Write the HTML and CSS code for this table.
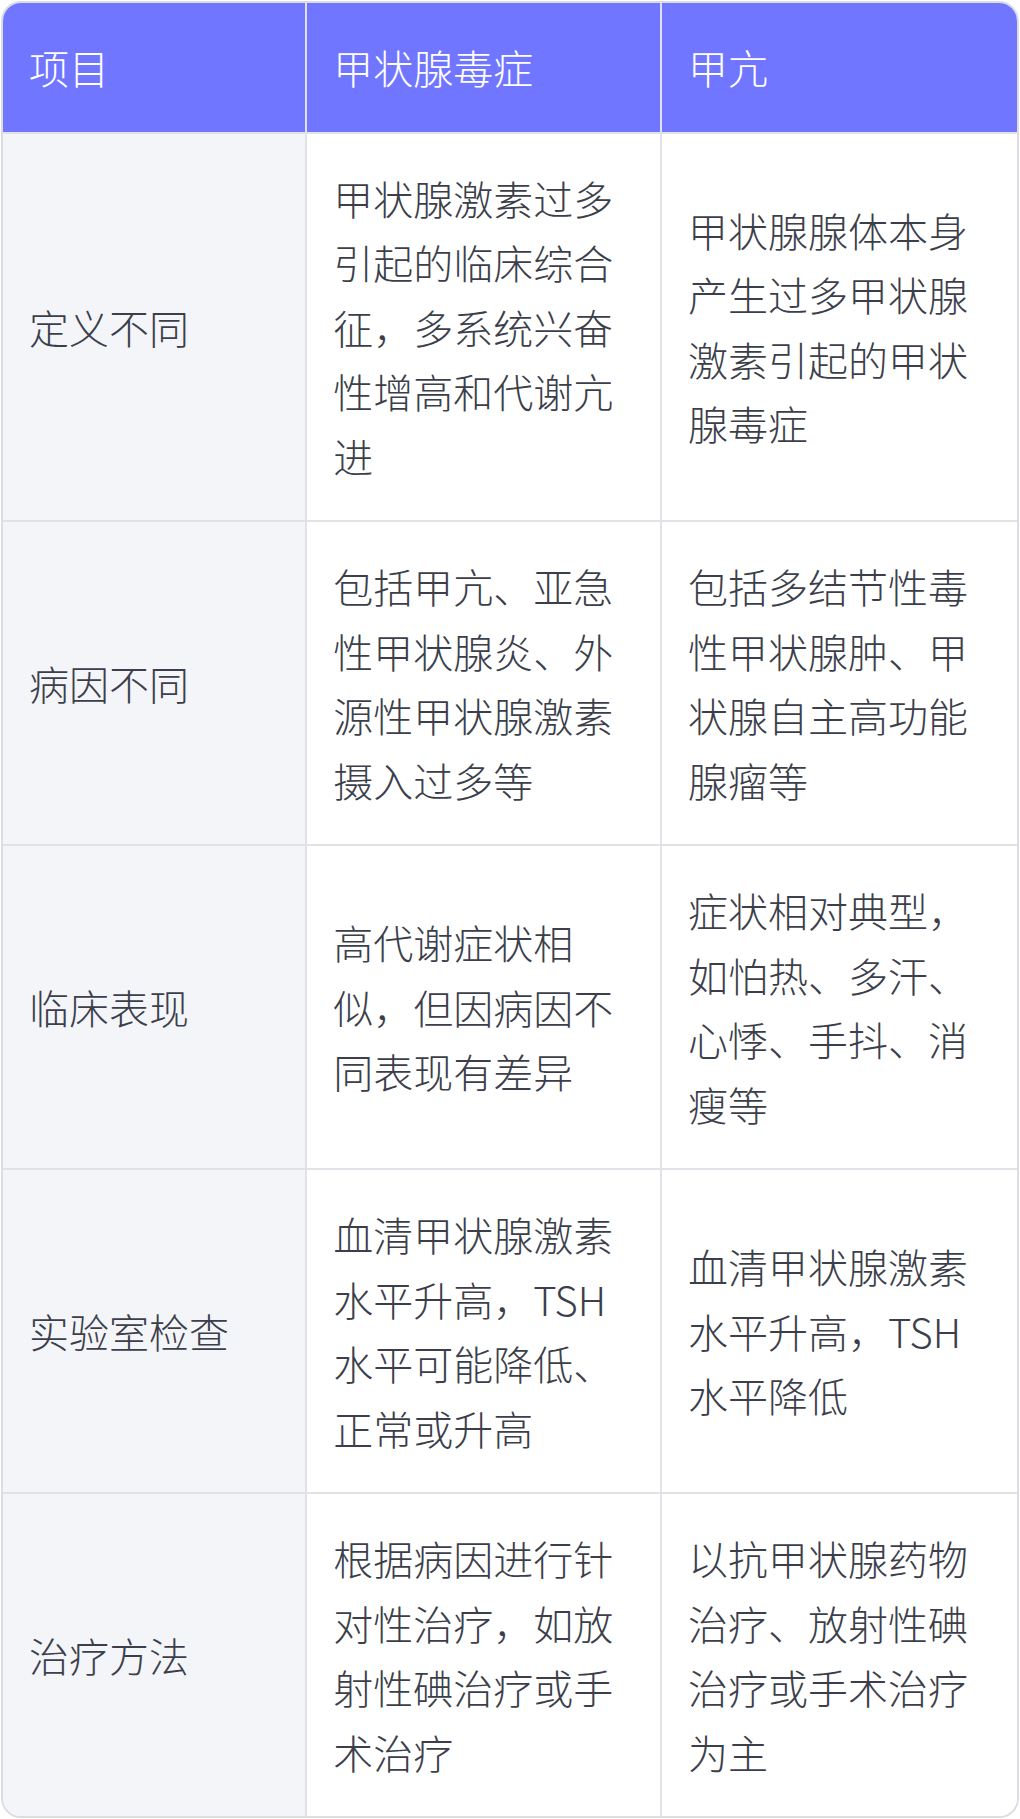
FILE: index.html
```html
<!DOCTYPE html>
<html lang="zh-CN">
<head>
<meta charset="utf-8">
<link rel="stylesheet" href="styles.css">
</head>
<body>
<div class="frame">
  <table class="cmp">
    <colgroup>
      <col class="c1"><col class="c2"><col class="c3">
    </colgroup>
    <thead>
      <tr><th>项目</th><th>甲状腺毒症</th><th>甲亢</th></tr>
    </thead>
    <tbody>
      <tr>
        <td class="key">定义不同</td>
        <td>甲状腺激素过多引起的临床综合征，多系统兴奋性增高和代谢亢进</td>
        <td>甲状腺腺体本身产生过多甲状腺激素引起的甲状腺毒症</td>
      </tr>
      <tr>
        <td class="key">病因不同</td>
        <td>包括甲亢、亚急性甲状腺炎、外源性甲状腺激素摄入过多等</td>
        <td>包括多结节性毒性甲状腺肿、甲状腺自主高功能腺瘤等</td>
      </tr>
      <tr>
        <td class="key">临床表现</td>
        <td>高代谢症状相似，但因病因不同表现有差异</td>
        <td>症状相对典型，如怕热、多汗、心悸、手抖、消瘦等</td>
      </tr>
      <tr>
        <td class="key">实验室检查</td>
        <td>血清甲状腺激素水平升高，TSH水平可能降低、正常或升高</td>
        <td>血清甲状腺激素水平升高，TSH水平降低</td>
      </tr>
      <tr>
        <td class="key">治疗方法</td>
        <td>根据病因进行针对性治疗，如放射性碘治疗或手术治疗</td>
        <td>以抗甲状腺药物治疗、放射性碘治疗或手术治疗为主</td>
      </tr>
    </tbody>
  </table>
</div>
</body>
</html>
```
FILE: styles.css
```css
html, body {
  margin: 0;
  padding: 0;
  background: #ffffff;
}
body {
  padding: 1px;
  font-family: "Noto Sans CJK SC Light", "Noto Sans CJK SC DemiLight", "Noto Sans SC Light", "Noto Sans CJK SC", "Noto Sans", sans-serif;
}
.frame {
  border: 2px solid #dcdde2;
  border-radius: 20px;
  overflow: hidden;
  background: #ffffff;
}
.cmp {
  width: 100%;
  border-collapse: separate;
  border-spacing: 0;
  table-layout: fixed;
  font-size: 40px;
  font-weight: 300;
  line-height: 64.5px;
}
.c1 { width: 30%; }
.c2 { width: 35%; }
.c3 { width: 35%; }
.cmp th,
.cmp td {
  padding: 32px 26px;
  text-align: left;
  vertical-align: middle;
  border-right: 2px solid #e1e2e7;
  border-bottom: 2px solid #e1e2e7;
  word-break: break-all;
}
.cmp th:last-child,
.cmp td:last-child {
  border-right: none;
}
.cmp tbody tr:last-child td {
  border-bottom: none;
}
.cmp th {
  background: #7076ff;
  color: #ffffff;
  font-weight: 300;
}
.cmp td {
  color: #3c3f4b;
  background: #ffffff;
}
.cmp td.key {
  background: #f4f5f9;
}
```
